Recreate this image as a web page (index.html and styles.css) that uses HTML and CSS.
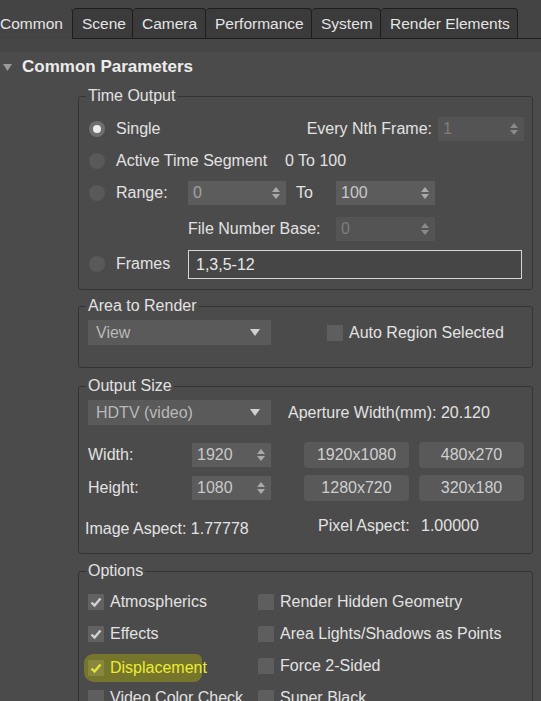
FILE: index.html
```html
<!DOCTYPE html>
<html>
<head>
<meta charset="utf-8">
<link rel="stylesheet" href="styles.css">
</head>
<body>
<div class="tabbar">
  <div class="tab active t-common">Common</div>
  <div class="tab t-scene">Scene</div>
  <div class="tab t-camera">Camera</div>
  <div class="tab t-perf">Performance</div>
  <div class="tab t-system">System</div>
  <div class="tab t-render">Render Elements</div>
</div>
<div class="band"></div>
<div class="rollout-head">
  <svg class="tri" width="9" height="7" viewBox="0 0 9 7"><polygon points="0,0 9,0 4.5,7" fill="#9a9a9a"/></svg>
  <span>Common Parameters</span>
</div>
<div class="rollout-body">
  <fieldset class="group g-time">
    <legend>Time Output</legend>
    <div class="row">
      <span class="radio on"></span><span class="lbl">Single</span>
      <span class="push">Every Nth Frame:</span>
      <span class="spin dis w-nth"><span>1</span><svg class="arr" width="8" height="12" viewBox="0 0 8 12"><polygon points="0,5 4,0 8,5"/><polygon points="0,7 8,7 4,12"/></svg></span>
    </div>
    <div class="row">
      <span class="radio"></span><span class="lbl lbl-wide">Active Time Segment</span>
      <span>0 To 100</span>
    </div>
    <div class="row">
      <span class="radio"></span><span class="lbl">Range:</span>
      <span class="spin w-range dim"><span>0</span><svg class="arr" width="8" height="12" viewBox="0 0 8 12"><polygon points="0,5 4,0 8,5"/><polygon points="0,7 8,7 4,12"/></svg></span>
      <span class="to">To</span>
      <span class="spin w-end"><span>100</span><svg class="arr" width="8" height="12" viewBox="0 0 8 12"><polygon points="0,5 4,0 8,5"/><polygon points="0,7 8,7 4,12"/></svg></span>
    </div>
    <div class="row row-fnb">
      <span class="lbl-fnb">File Number Base:</span>
      <span class="spin dis w-end"><span>0</span><svg class="arr" width="8" height="12" viewBox="0 0 8 12"><polygon points="0,5 4,0 8,5"/><polygon points="0,7 8,7 4,12"/></svg></span>
    </div>
    <div class="row row-frames">
      <span class="radio"></span><span class="lbl">Frames</span>
      <span class="textfield">1,3,5-12</span>
    </div>
  </fieldset>

  <fieldset class="group g-area">
    <legend>Area to Render</legend>
    <div class="row row-dd">
      <span class="dropdown"><span>View</span><svg width="10" height="7" viewBox="0 0 10 7"><polygon points="0,0 10,0 5,7" fill="#d0d0d0"/></svg></span>
      <span class="cb auto-cb"></span><span class="cb-lbl">Auto Region Selected</span>
    </div>
  </fieldset>

  <fieldset class="group g-size">
    <legend>Output Size</legend>
    <div class="row row-dd">
      <span class="dropdown"><span>HDTV (video)</span><svg width="10" height="7" viewBox="0 0 10 7"><polygon points="0,0 10,0 5,7" fill="#d0d0d0"/></svg></span>
      <span class="aperture">Aperture Width(mm): 20.120</span>
    </div>
    <div class="row row-dim r-width">
      <span class="dim-lbl">Width:</span>
      <span class="spin w-dim"><span>1920</span><svg class="arr" width="8" height="12" viewBox="0 0 8 12"><polygon points="0,5 4,0 8,5"/><polygon points="0,7 8,7 4,12"/></svg></span>
      <span class="btn first">1920x1080</span>
      <span class="btn">480x270</span>
    </div>
    <div class="row row-dim r-height">
      <span class="dim-lbl">Height:</span>
      <span class="spin w-dim"><span>1080</span><svg class="arr" width="8" height="12" viewBox="0 0 8 12"><polygon points="0,5 4,0 8,5"/><polygon points="0,7 8,7 4,12"/></svg></span>
      <span class="btn first">1280x720</span>
      <span class="btn">320x180</span>
    </div>
    <div class="row row-aspect">
      <span class="img-aspect">Image Aspect: 1.77778</span>
      <span class="px-lbl">Pixel Aspect:</span>
      <span class="px-val">1.00000</span>
    </div>
  </fieldset>

  <fieldset class="group g-opt">
    <legend>Options</legend>
    <div class="opt-grid">
      <div class="opt"><span class="cb on"><svg width="14" height="14" viewBox="0 0 14 14"><path d="M2.5 7.5 L5.5 10.5 L11.5 3.5" fill="none" stroke="#d2d2d2" stroke-width="2.4"/></svg></span><span class="cb-lbl">Atmospherics</span></div>
      <div class="opt"><span class="cb"></span><span class="cb-lbl">Render Hidden Geometry</span></div>
      <div class="opt"><span class="cb on"><svg width="14" height="14" viewBox="0 0 14 14"><path d="M2.5 7.5 L5.5 10.5 L11.5 3.5" fill="none" stroke="#d2d2d2" stroke-width="2.4"/></svg></span><span class="cb-lbl">Effects</span></div>
      <div class="opt"><span class="cb"></span><span class="cb-lbl">Area Lights/Shadows as Points</span></div>
      <div class="opt"><span class="hl"><span class="cb on"><svg width="14" height="14" viewBox="0 0 14 14"><path d="M2.5 7.5 L5.5 10.5 L11.5 3.5" fill="none" stroke="#e4e43c" stroke-width="2.4"/></svg></span><span class="cb-lbl">Displacement</span></span></div>
      <div class="opt"><span class="cb"></span><span class="cb-lbl">Force 2-Sided</span></div>
      <div class="opt"><span class="cb"></span><span class="cb-lbl">Video Color Check</span></div>
      <div class="opt"><span class="cb"></span><span class="cb-lbl">Super Black</span></div>
    </div>
  </fieldset>
</div>
</body>
</html>
```

FILE: styles.css
```css
* { box-sizing: border-box; }
html, body { margin: 0; height: 100%; }
body {
  background: #4b4b4b;
  color: #e2e2e2;
  font-family: "Liberation Sans", Arial, sans-serif;
  font-size: 16px;
  overflow: hidden;
}

/* tabs */
.tabbar {
  height: 39px;
  background: #444444;
  border-bottom: 1px solid #1e1e1e;
  display: flex;
  align-items: flex-end;
}
.tab {
  height: 30px;
  line-height: 29px;
  font-size: 15.5px;
  padding-left: 9px;
  background: #3b3b3b;
  border-top: 1px solid #1e1e1e;
  border-right: 1px solid #1e1e1e;
  border-radius: 4px 4px 0 0;
  color: #e4e4e4;
  white-space: nowrap;
  flex: none;
}
.tab.active {
  background: #444444;
  height: 31px;
  margin-bottom: -1px;
  border-top-color: transparent;
  padding-left: 0;
  border-radius: 0 4px 0 0;
}
.t-common { width: 73px; }
.t-scene { width: 60px; }
.t-camera { width: 73px; }
.t-perf { width: 106px; }
.t-system { width: 69px; }
.t-render { width: 137px; }

.band {
  height: 13px;
  background: #464646;
}

.rollout-head {
  height: 29px;
  padding-top: 1px;
  line-height: 28px;
  padding-left: 3px;
  font-weight: bold;
  font-size: 17px;
  color: #ececec;
  display: flex;
  align-items: center;
}
.tri { margin-right: 10px; flex: none; }

.rollout-body {
  padding: 6px 8px 0 78px;
}

/* groups */
.group {
  margin: 0;
  border: 1px solid #343434;
  border-radius: 3px;
  padding: 0 8px 0 9px;
  min-inline-size: auto;
}
.group legend {
  padding: 0 2px;
  margin-left: -2px;
  line-height: 18px;
  font-size: 16px;
  color: #e2e2e2;
}
.g-time { padding-top: 8px; padding-bottom: 9px; }
.g-area { margin-top: 7px; padding-top: 5px; padding-bottom: 22px; }
.g-size { margin-top: 9px; padding-top: 5px; padding-bottom: 14px; }
.g-opt { margin-top: 8px; padding-top: 6px; padding-bottom: 20px; }

.row {
  display: flex;
  align-items: center;
  height: 32px;
  white-space: nowrap;
}

/* time output */
.radio {
  width: 16px;
  height: 16px;
  border-radius: 50%;
  background: #595959;
  flex: none;
  margin-left: 1px;
  margin-right: 11px;
  display: flex;
  align-items: center;
  justify-content: center;
}
.radio.on { background: #6f6f6f; }
.radio.on::after {
  content: "";
  width: 8px;
  height: 8px;
  border-radius: 50%;
  background: #ededed;
}
.lbl { width: 72px; flex: none; }
.lbl-wide { width: 169px; }
.push { margin-left: auto; margin-right: 6px; }
.to { width: 50px; padding-left: 10px; flex: none; }
.row-fnb { margin-top: 4px; padding-left: 100px; }
.lbl-fnb { width: 148px; flex: none; }
.row-frames { margin-top: 3px; }

.spin {
  height: 24px;
  background: #5c5c5c;
  color: #c8c8c8;
  display: flex;
  align-items: center;
  justify-content: space-between;
  padding: 0 6px 0 5px;
  flex: none;
}
.spin .arr { fill: #a9a9a9; flex: none; }
.spin.dis { background: #545454; color: #7e7e7e; }
.spin.dis .arr { fill: #8a8a8a; }
.spin.dim { color: #a2a2a2; }
.w-nth { width: 86px; }
.w-range { width: 98px; }
.w-end { width: 99px; }
.w-dim { width: 79px; }

.textfield {
  flex: none;
  width: 334px;
  height: 29px;
  border: 1px solid #d6d6d6;
  background: #464646;
  color: #e8e8e8;
  padding-left: 7px;
  line-height: 27px;
}

/* area to render */
.row-dd { height: 25px; }
.dropdown {
  width: 183px;
  height: 25px;
  background: #5a5a5a;
  color: #b9b9b9;
  display: flex;
  align-items: center;
  justify-content: space-between;
  padding: 0 11px 0 8px;
  flex: none;
}
.cb {
  width: 16px;
  height: 16px;
  background: #5e5e5e;
  flex: none;
  display: flex;
  align-items: center;
  justify-content: center;
}
.auto-cb { margin-left: 56px; }
.cb-lbl { margin-left: 6px; }

/* output size */
.aperture { margin-left: 17px; }
.r-width { margin-top: 17px; height: 26px; }
.r-height { margin-top: 7px; height: 26px; }
.dim-lbl { width: 104px; flex: none; }
.btn {
  width: 105px;
  height: 26px;
  line-height: 26px;
  background: #595959;
  color: #cfcfcf;
  border-radius: 4px;
  text-align: center;
  margin-left: 10px;
  flex: none;
}
.btn.first { margin-left: 33px; }
.row-aspect { margin-top: 12px; height: 26px; }
.img-aspect { width: 233px; margin-left: -3px; flex: none; position: relative; top: 3px; }
.px-lbl { width: 103px; flex: none; }

/* options */
.opt-grid {
  display: grid;
  grid-template-columns: 170px 1fr;
  grid-auto-rows: 32px;
}
.opt {
  display: flex;
  align-items: center;
  white-space: nowrap;
}
.cb.on { background: #626262; }
.hl {
  display: flex;
  align-items: center;
  background: #75752c;
  border-radius: 9px 6px 8px 10px;
  margin-left: -4px;
  padding: 5px 0 5px 4px;
  width: 118px;
  color: #ecec34;
  margin-top: 4px;
}
.hl .cb.on { background: #86863e; }
```
